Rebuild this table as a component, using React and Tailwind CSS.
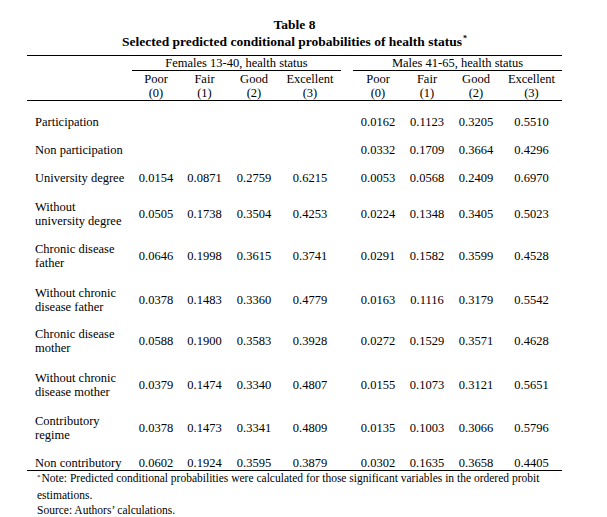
const cols = 'grid grid-cols-[105px_48px_49px_50px_62px_12px_50px_48px_50px_61px]';

const rows = [
  { label: ['Participation'], pad: 'pt-[14px]', f: null, m: ['0.0162', '0.1123', '0.3205', '0.5510'] },
  { label: ['Non participation'], pad: 'pt-[14px]', f: null, m: ['0.0332', '0.1709', '0.3664', '0.4296'] },
  { label: ['University degree'], pad: 'pt-[14px]', f: ['0.0154', '0.0871', '0.2759', '0.6215'], m: ['0.0053', '0.0568', '0.2409', '0.6970'] },
  { label: ['Without', 'university degree'], pad: 'pt-[15px]', f: ['0.0505', '0.1738', '0.3504', '0.4253'], m: ['0.0224', '0.1348', '0.3405', '0.5023'] },
  { label: ['Chronic disease', 'father'], pad: 'pt-[14px]', f: ['0.0646', '0.1998', '0.3615', '0.3741'], m: ['0.0291', '0.1582', '0.3599', '0.4528'] },
  { label: ['Without chronic', 'disease father'], pad: 'pt-[16px]', f: ['0.0378', '0.1483', '0.3360', '0.4779'], m: ['0.0163', '0.1116', '0.3179', '0.5542'] },
  { label: ['Chronic disease', 'mother'], pad: 'pt-[13px]', f: ['0.0588', '0.1900', '0.3583', '0.3928'], m: ['0.0272', '0.1529', '0.3571', '0.4628'] },
  { label: ['Without chronic', 'disease mother'], pad: 'pt-[16px]', f: ['0.0379', '0.1474', '0.3340', '0.4807'], m: ['0.0155', '0.1073', '0.3121', '0.5651'] },
  { label: ['Contributory', 'regime'], pad: 'pt-[15px]', f: ['0.0378', '0.1473', '0.3341', '0.4809'], m: ['0.0135', '0.1003', '0.3066', '0.5796'] },
  { label: ['Non contributory'], pad: 'pt-[14px]', f: ['0.0602', '0.1924', '0.3595', '0.3879'], m: ['0.0302', '0.1635', '0.3658', '0.4405'] },
];

const heads = [
  ['Poor', '(0)'],
  ['Fair', '(1)'],
  ['Good', '(2)'],
  ['Excellent', '(3)'],
];

function Values({ vals }) {
  if (!vals) return [0, 1, 2, 3].map((i) => <div key={i} />);
  return vals.map((v, i) => (
    <div key={i} className="flex items-center justify-center">
      {v}
    </div>
  ));
}

export default function App() {
  return (
    <div className="w-[607px] h-[517px] bg-white overflow-hidden text-black [font-family:'Liberation_Serif','Times_New_Roman',serif]">
      {/* Title */}
      <div className="ml-[27px] w-[535px] pt-[17px] text-center font-bold text-[13.5px]">
        <div className="leading-[16px]">Table 8</div>
        <div className="leading-[18px]">
          Selected predicted conditional probabilities of health status<span className="relative top-[-5px] text-[8px] leading-[8px] ml-[1px]">*</span>
        </div>
      </div>

      {/* Table */}
      <div className="ml-[27px] w-[535px] mt-[4px] border-t border-black text-[12.5px] leading-[14px]">
        {/* group header */}
        <div className={cols}>
          <div />
          <div className="col-span-4 h-[15px] border-b border-black text-center">Females 13-40, health status</div>
          <div />
          <div className="col-span-4 h-[15px] border-b border-black text-center">Males 41-65, health status</div>
        </div>
        {/* sub header */}
        <div className={`${cols} pt-[1px] border-b border-black`}>
          <div />
          {heads.map((h) => (
            <div key={'f' + h[0]} className="text-center">
              <div>{h[0]}</div>
              <div>{h[1]}</div>
            </div>
          ))}
          <div />
          {heads.map((h) => (
            <div key={'m' + h[0]} className="text-center">
              <div>{h[0]}</div>
              <div>{h[1]}</div>
            </div>
          ))}
        </div>

        {/* body */}
        <div className="border-b border-black">
          {rows.map((r) => (
            <div key={r.label.join(' ')} className={`${cols} ${r.pad}`}>
              <div className="pl-[8px] whitespace-nowrap">
                {r.label.map((l) => (
                  <div key={l}>{l}</div>
                ))}
              </div>
              <Values vals={r.f} />
              <div />
              <Values vals={r.m} />
            </div>
          ))}
        </div>
      </div>

      {/* Notes */}
      <div className="ml-[37px] w-[520px] text-[11.5px] leading-[15px]">
        <div>
          <span className="relative top-[-3px] text-[7px] mr-[1px]">*</span>Note: Predicted conditional probabilities were calculated for those significant variables in the ordered probit
          estimations.
        </div>
        <div>Source: Authors’ calculations.</div>
      </div>
    </div>
  );
}
